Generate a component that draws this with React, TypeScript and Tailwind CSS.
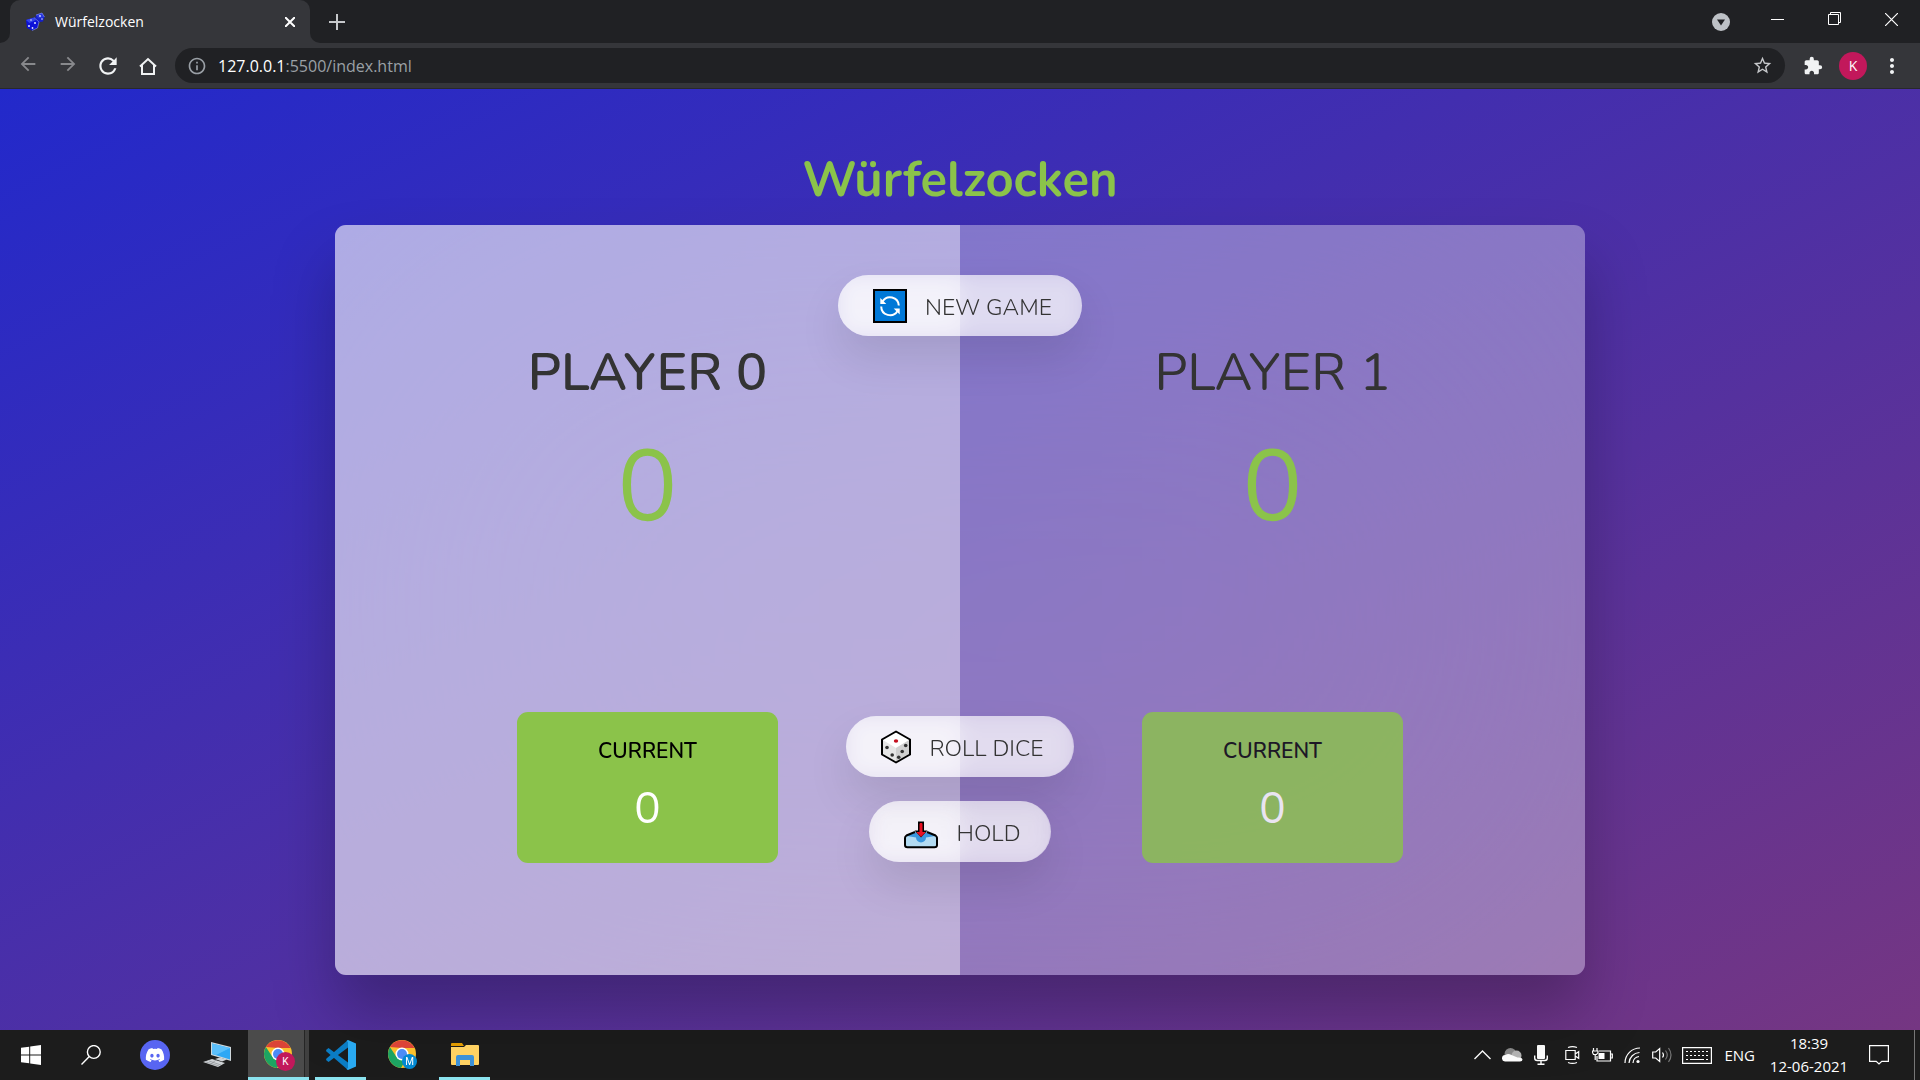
import React from "react";
import { MdExtension, MdRefresh, MdArrowBack, MdArrowForward, MdStarBorder, MdInfoOutline, MdMoreVert } from "react-icons/md";
import { FaDiscord } from "react-icons/fa";

function DiceFavicon() {
  return (
    <svg width="20" height="20" viewBox="0 0 20 20" aria-hidden="true">
      <path d="M11 3l6-2 2.500 4-1.500 4.500-5.500 1L10 7z" fill="#1620c8" />
      <path d="M11 3l6-2 2.500 4-6 1.500z" fill="#2a38e0" />
      <path d="M1 8l8-2.500L14 10l-1.500 6-5.500 2.500L2 16z" fill="#0d12d8" />
      <path d="M1 8l8-2.500 2 2.500-6.500 3z" fill="#3646ea" />
      <path d="M9 5.500L14 10l-1.500 6L7 18.500M11 3l6-2 2.500 4" fill="none" stroke="#8d9af0" strokeWidth=".6" />
      <circle cx="4" cy="14" r="1" fill="#dfe4ff" /><circle cx="7.500" cy="16" r=".9" fill="#dfe4ff" />
      <circle cx="10" cy="11" r="1" fill="#dfe4ff" /><circle cx="15" cy="4" r=".9" fill="#dfe4ff" />
      <circle cx="17" cy="7" r=".8" fill="#dfe4ff" /><circle cx="6" cy="8" r=".8" fill="#dfe4ff" />
    </svg>
  );
}

function RefreshEmoji() {
  return (
    <svg width="34" height="34" viewBox="0 0 34 34" aria-hidden="true">
      <rect x="1" y="1" width="32" height="32" fill="#0078d7" stroke="#000" strokeWidth="2" />
      <g fill="none" stroke="#fff" strokeWidth="2">
        <path d="M9.500 12.500A8.800 8.800 0 0 1 25.800 16.500" />
        <path d="M8.200 17.500a8.800 8.800 0 0 0 16.300 4.500" />
      </g>
      <path d="M7.300 9v6h6zM26.700 25.500v-6h-6z" fill="#fff" />
    </svg>
  );
}

function DiceEmoji() {
  return (
    <svg width="30" height="34" viewBox="1 0 30 34" aria-hidden="true">
      <path d="M16 1.500L30 9.500v15L16 32.500 2 24.500v-15z" fill="#e6e6e6" />
      <path d="M16 1.500L30 9.500 16 18 2 9.500z" fill="#fff" />
      <path d="M16 18L30 9.500v15L16 32.500z" fill="#d0d0d0" />
      <path d="M16 1.500L30 9.500v15L16 32.500 2 24.500v-15z" fill="none" stroke="#000" strokeWidth="2" strokeLinejoin="round" />
      <ellipse cx="16" cy="11" rx="2.200" ry="1.700" fill="#c50f1f" />
      <g fill="#333">
        <circle cx="7" cy="17.500" r="1.800" /><circle cx="12.200" cy="25" r="1.800" />
        <circle cx="25.700" cy="15.500" r="1.800" /><circle cx="22.200" cy="21.500" r="1.800" /><circle cx="18.700" cy="27.300" r="1.800" />
      </g>
    </svg>
  );
}

function InboxEmoji() {
  return (
    <svg width="34" height="34" viewBox="0 0 34 34" aria-hidden="true">
      <path d="M2 21l11-5h8l11 5v9q0 2-2 2H4q-2 0-2-2z" fill="#b3dbf2" />
      <path d="M3 21l10-4h8l10 4-9 1.500a5 5 0 0 1-10 0z" fill="#3a96dd" />
      <path d="M12.500 22a4.600 4.600 0 0 0 9 0z" fill="#3a96dd" />
      <path d="M11 17l-8.500 3.500Q1 21.500 1 23v7q0 2.200 2.500 2.200h27Q33 32.200 33 30v-7q0-1.500-1.500-2.500L23 17" fill="none" stroke="#000" strokeWidth="2" />
      <path d="M14 6.500h6v9h3.500L17 22.500 10.500 15.500H14z" fill="#000" />
      <path d="M16 8.500h2v9h3L17 21.500 13 17.500h3z" fill="#e81123" stroke="#e81123" />
    </svg>
  );
}

type PlayerProps = { name: string; score: number; current: number; active?: boolean };

function Player({ name, score, current, active }: PlayerProps) {
  return (
    <section className={`flex flex-1 flex-col items-center px-28 pt-[114px] pb-28 ${active ? "bg-white/40" : ""}`}>
      <h2 className={`text-[52px] leading-[68px] whitespace-nowrap uppercase text-[#333] ${active ? "font-semibold" : "font-normal"}`}>{name}</h2>
      <p className="mt-3 text-[100px] leading-[136px] text-[#8bc34a]">{score}</p>
      <div className={`mt-[157px] flex w-[65%] flex-col items-center gap-[10px] rounded-[11px] bg-[#8bc34a] pt-[25px] pb-5 ${active ? "" : "opacity-80"}`}>
        <p className="text-[21px] leading-7 font-semibold text-black uppercase">Current</p>
        <p className="text-[44px] leading-[68px] text-white">{current}</p>
      </div>
    </section>
  );
}

function GameButton({ icon, label }: { icon: React.ReactNode; label: string }) {
  return (
    <button className="flex h-[61px] items-center gap-[18px] rounded-full bg-white/60 pr-[30px] pl-[35px] text-[23px] font-light text-[#333] uppercase shadow-[0_22px_44px_rgba(0,0,0,0.1)] backdrop-blur-[10px]">
      {icon}
      <span className="pt-[5px]">{label}</span>
    </button>
  );
}

function Browser() {
  return (
    <header className="bg-[#35363a] font-['Open_Sans','Noto_Sans',sans-serif]">
      <div className="flex h-[43px] items-stretch bg-[#202124]">
        <div className="flex w-[10px] bg-[#35363a]"><div className="w-full rounded-br-[10px] bg-[#202124]" /></div>
        <div className="flex w-[300px] items-center rounded-t-[10px] bg-[#35363a] pr-[10px] pl-[15px]">
          <DiceFavicon />
          <span className="ml-[10px] flex-1 text-[14px] text-white">Würfelzocken</span>
          <button aria-label="Close tab" className="flex size-5 items-center justify-center">
            <svg width="10" height="10" viewBox="0 0 10 10" stroke="#fff" strokeWidth="2"><path d="M0 0l10 10M10 0L0 10" /></svg>
          </button>
        </div>
        <div className="flex w-[10px] bg-[#35363a]"><div className="w-full rounded-bl-[10px] bg-[#202124]" /></div>
        <button aria-label="New tab" className="flex w-[34px] items-center justify-center">
          <svg width="16" height="16" viewBox="0 0 16 16" stroke="#c6c8cb" strokeWidth="2"><path d="M8 0v16M0 8h16" /></svg>
        </button>
        <div className="flex-1" />
        <button aria-label="Search tabs" className="mr-2 flex w-10 items-center justify-center">
          <svg width="18" height="18" viewBox="0 0 18 18"><circle cx="9" cy="9" r="9" fill="#bdc1c6" /><path d="M5 6.500h8L9 12.500z" fill="#202124" /></svg>
        </button>
        <div className="flex h-[38px]">
          <button aria-label="Minimise" className="flex w-[57px] items-center justify-center"><svg width="13" height="13" stroke="#fff"><path d="M0 6.500h13" /></svg></button>
          <button aria-label="Restore" className="flex w-[57px] items-center justify-center"><svg width="14" height="14" viewBox="0 0 14 14" stroke="#fff" fill="none"><path d="M.5 2.500h10v10H.5zM2.500 2.500v-2h10v10h-2" /></svg></button>
          <button aria-label="Close" className="flex w-[57px] items-center justify-center"><svg width="13" height="13" viewBox="0 0 13 13" stroke="#fff" strokeWidth="1.200"><path d="M0 0l13 13M13 0L0 13" /></svg></button>
        </div>
      </div>
      <div className="flex h-[46px] items-center border-b border-[#28292c] pl-2">
        <div className="flex">
          <button aria-label="Back" className="flex w-10 justify-center"><MdArrowBack size={22} color="#88898c" /></button>
          <button aria-label="Forward" className="flex w-10 justify-center"><MdArrowForward size={22} color="#88898c" /></button>
          <button aria-label="Reload" className="flex w-10 justify-center"><MdRefresh size={26} color="#f1f3f4" /></button>
          <button aria-label="Home" className="flex w-10 items-center justify-center"><svg width="20" height="22" viewBox="0 0 20 22" fill="none" stroke="#f1f3f4" strokeWidth="2"><path d="M2 11.500L10 4l8 7.500M4 10v9h12v-9" /></svg></button>
        </div>
        <div className="ml-[7px] flex h-[35px] flex-1 items-center rounded-full bg-[#202124] px-3">
          <MdInfoOutline size={20} color="#9aa0a6" />
          <a href="#address" className="ml-[11px] flex-1 text-[16px] text-[#9aa0a6]"><span className="text-white">127.0.0.1</span>:5500/index.html</a>
          <button aria-label="Bookmark"><MdStarBorder size={21} color="#c6c8cb" /></button>
        </div>
        <button aria-label="Extensions" className="ml-[18px]"><MdExtension size={20} color="#f1f3f4" /></button>
        <button className="ml-4 flex size-7 items-center justify-center rounded-full bg-[#c2185b] text-sm text-white">K</button>
        <button aria-label="Menu" className="mr-4 ml-[13px]"><MdMoreVert size={24} color="#f1f3f4" /></button>
      </div>
    </header>
  );
}

function ChromeIcon({ badge, color }: { badge: string; color: string }) {
  return (
    <svg width="32" height="32" viewBox="0 0 32 32" aria-hidden="true">
      <circle cx="15" cy="15" r="14" fill="#fbc02d" />
      <path d="M2.900 8A14 14 0 0 1 27.500 9H15z" fill="#db4437" />
      <path d="M2.900 8A14 14 0 0 0 14 29L20 18.500 9.500 18z" fill="#1da462" />
      <circle cx="15" cy="15" r="6.500" fill="#fff" />
      <circle cx="15" cy="15" r="5" fill="#4c8bf5" />
      <circle cx="22.500" cy="22.500" r={badge === "K" ? 9.500 : 7.500} fill={color} />
      <text x="22.500" y="26" textAnchor="middle" fontSize="10" fontFamily="Roboto" fill="#fff">{badge}</text>
    </svg>
  );
}

function TaskItem({ label, open, active, children }: { label: string; open?: boolean; active?: boolean; children: React.ReactNode }) {
  return (
    <button aria-label={label} className={`relative flex w-[61px] items-center justify-center ${active ? "bg-[#4b4b4b]" : ""}`}>
      {active && <span className="absolute inset-y-0 right-0 w-[5px] border-l border-[#262626] bg-[#404040]" />}
      {children}
      {open && <span className={`absolute bottom-0 h-[3px] bg-[#8be3ef] ${active ? "inset-x-0" : "inset-x-[5px]"}`} />}
    </button>
  );
}

function Taskbar() {
  return (
    <footer className="flex h-[50px] bg-[#1c1c1c] font-['Open_Sans','Noto_Sans',sans-serif] text-white">
      <div className="flex gap-px">
        <TaskItem label="Start">
          <svg width="20" height="20" viewBox="0 0 20 20" fill="#fff"><path d="M0 2.800L8.200 1.700v7.800H0zM9.200 1.500L20 0v9.500H9.200zM0 10.500h8.200v7.800L0 17.200zM9.200 10.500H20V20L9.200 18.500z" /></svg>
        </TaskItem>
        <TaskItem label="Search">
          <svg className="mr-1" width="20" height="20" viewBox="0 0 20 20" fill="none" stroke="#fff" strokeWidth="1.400"><circle cx="12.800" cy="7" r="6.400" /><path d="M8.300 11.500L.5 19.500" /></svg>
        </TaskItem>
        <TaskItem label="Discord"><span className="flex size-[30px] items-center justify-center rounded-full bg-[#5865f2]"><FaDiscord size={20} /></span></TaskItem>
        <TaskItem label="Computer">
          <svg width="28" height="26" viewBox="0 0 28 26"><path d="M8 0l20 5v14L8 13z" fill="#cfd8dc" /><path d="M9 1.500l18 4.500v11.500L9 12z" fill="#2fa8f5" /><path d="M9 1.500l18 4.500-14 7-4-1z" fill="#5cc0fb" /><path d="M12 17l5-1.500 7 2-5 2zM0 20l9-3 13 4-7 4z" fill="#cfd3d6" /><path d="M3 20l13 4M6 19l12 4M8 22l5-4" stroke="#8b8f92" strokeWidth=".7" /></svg>
        </TaskItem>
        <TaskItem label="Chrome K" open active><ChromeIcon badge="K" color="#c2185b" /></TaskItem>
        <TaskItem label="Visual Studio Code" open>
          <svg width="30" height="30" viewBox="0 0 30 30"><path d="M0 10l2.500-2L22 22.500V30L0.500 11.500z" fill="#0a7cc4" /><path d="M0 20l2.500 2L22 7.500V0L.5 18.500z" fill="#0a7cc4" /><path d="M22 0l8 3.500v23L22 30l-1.500-1 1.500-1V2l-1.500-1z" fill="#29a9f1" /></svg>
        </TaskItem>
        <TaskItem label="Chrome M"><ChromeIcon badge="M" color="#0288d1" /></TaskItem>
        <TaskItem label="File Explorer" open>
          <svg width="28" height="24" viewBox="0 0 28 24"><path d="M0 1q0-1 1-1h10l2 3H0z" fill="#e09a00" /><path d="M0 4h13l2-2h12q1 0 1 1v18q0 1-1 1H1q-1 0-1-1z" fill="#ffd262" /><path d="M5 23V14q0-2 2-2h14q2 0 2 2v9h-4v-6H9v6z" fill="#3c91d8" /></svg>
        </TaskItem>
      </div>
      <div className="flex-1" />
      <div className="flex items-center">
        <button aria-label="Hidden icons" className="mr-[11px]"><svg width="17" height="10" fill="none" stroke="#fff" strokeWidth="1.400"><path d="M.5 9l8-8 8 8" /></svg></button>
        <svg className="mr-[11px]" width="21" height="14" viewBox="0 0 21 14"><circle cx="8.500" cy="6" r="6" fill="#8a8a8a" /><circle cx="14.500" cy="7.500" r="5" fill="#b5b5b5" /><path d="M3 13.500a3 3 0 0 1 .5-6.500Q6 5 9.500 7l6 2.500q4.500-.5 5 2 0 2-2.500 2z" fill="#fff" /></svg>
        <svg className="mr-[17px]" width="14" height="20" viewBox="0 0 14 20" fill="none" stroke="#fff" strokeWidth="1.400"><rect x="3" y="0" width="8" height="14" rx="1" fill="#fff" stroke="none" /><path d="M.7 10.500v2.500q0 2.500 2.500 2.500h7.600q2.500 0 2.500-2.500v-2.500M7 15.500v4M3.500 19.300h7" /></svg>
        <svg className="mr-[11px]" width="16" height="18" viewBox="0 0 16 18" fill="none" stroke="#fff" strokeWidth="1.200"><path d="M3 1.500q4.500-1.800 9 0M3 16.500q4.500 1.800 9 0M.8 4.500h9.400v9H.8zM10.200 8l3.500-2.300v6.600L10.200 10" /></svg>
        <svg className="mr-[11px]" width="21" height="14" viewBox="0 0 21 14" fill="none" stroke="#fff" strokeWidth="1.200"><path d="M7 3h11.500v10H5V8M18.500 6h1.800v4h-1.800M1.500 0v3M5 0v3M.5 3h5.500v1.500L4.500 6.500h-3L.5 4.500zM3.200 6.500V12" /><rect x="6.500" y="5" width="6" height="6" fill="#fff" stroke="none" /></svg>
        <svg className="mr-[11px]" width="17" height="17" viewBox="0 0 17 17" fill="none" stroke="#fff" strokeWidth="1.200"><path d="M9 16a7 7 0 0 1 6-6.500M5 16A11 11 0 0 1 15.500 5.500M1 16A15 15 0 0 1 16 1" /><circle cx="14" cy="14.500" r="1.600" fill="#fff" stroke="none" /></svg>
        <svg className="mr-[9px]" width="21" height="18" viewBox="0 0 21 18" fill="none" stroke="#fff" strokeWidth="1.200"><path d="M.7 6v6h3l4 3.500v-13L3.700 6zM10.500 6.500q2 2.500 0 5" /><path d="M13.500 4.500q3.500 4.500 0 9M16.500 2q5 7 0 14" stroke="#777" /></svg>
        <svg className="mr-3" width="30" height="17" viewBox="0 0 30 17" fill="none" stroke="#fff" strokeWidth="1.200"><path d="M.6.600h28.800v15.800H.6z" /><path d="M4 4.500h22M4 8.500h22" strokeDasharray="2 2" /><path d="M4 12.500h2M8 12.500h14M24 12.500h2" /></svg>
        <span className="text-[15px]">ENG</span>
        <div className="ml-4 flex w-[76px] flex-col items-center text-[15px] leading-[23px]"><time>18:39</time><time className="whitespace-nowrap">12-06-2021</time></div>
        <button aria-label="Notifications" className="ml-[22px]"><svg width="20" height="20" viewBox="0 0 20 20" fill="none" stroke="#fff" strokeWidth="1.200"><path d="M.6.600h18.800v15.800h-6.600L10 19l-2.800-2.600H.6z" /></svg></button>
        <span className="mr-[5px] ml-[25px] h-[50px] w-px bg-[#777]" />
      </div>
    </footer>
  );
}

export default function App() {
  return (
    <div className="flex min-h-screen flex-col">
      <Browser />
      <main className="flex flex-1 flex-col items-center bg-linear-to-tl/srgb from-[#753682] to-[#2229cb] px-6 pb-[55px] font-['Nunito',Lato,sans-serif]">
        <h1 className="mt-[57px] text-[49px] leading-[68px] font-bold text-[#8bc34a]">Würfelzocken</h1>
        <div className="relative mt-[11px] flex w-full max-w-[1250px] overflow-hidden rounded-[11px] bg-white/35 shadow-[0_38px_62px_rgba(0,0,0,0.25)] backdrop-blur-[200px]">
          <Player name="Player 0" score={0} current={0} active />
          <Player name="Player 1" score={0} current={0} />
          <div className="absolute inset-y-0 left-1/2 flex -translate-x-1/2 flex-col items-center pt-[50px] pb-[113px]">
            <GameButton icon={<RefreshEmoji />} label="New game" />
            <div className="mt-auto flex flex-col items-center gap-6">
              <GameButton icon={<DiceEmoji />} label="Roll dice" />
              <GameButton icon={<InboxEmoji />} label="Hold" />
            </div>
          </div>
        </div>
      </main>
      <Taskbar />
    </div>
  );
}
